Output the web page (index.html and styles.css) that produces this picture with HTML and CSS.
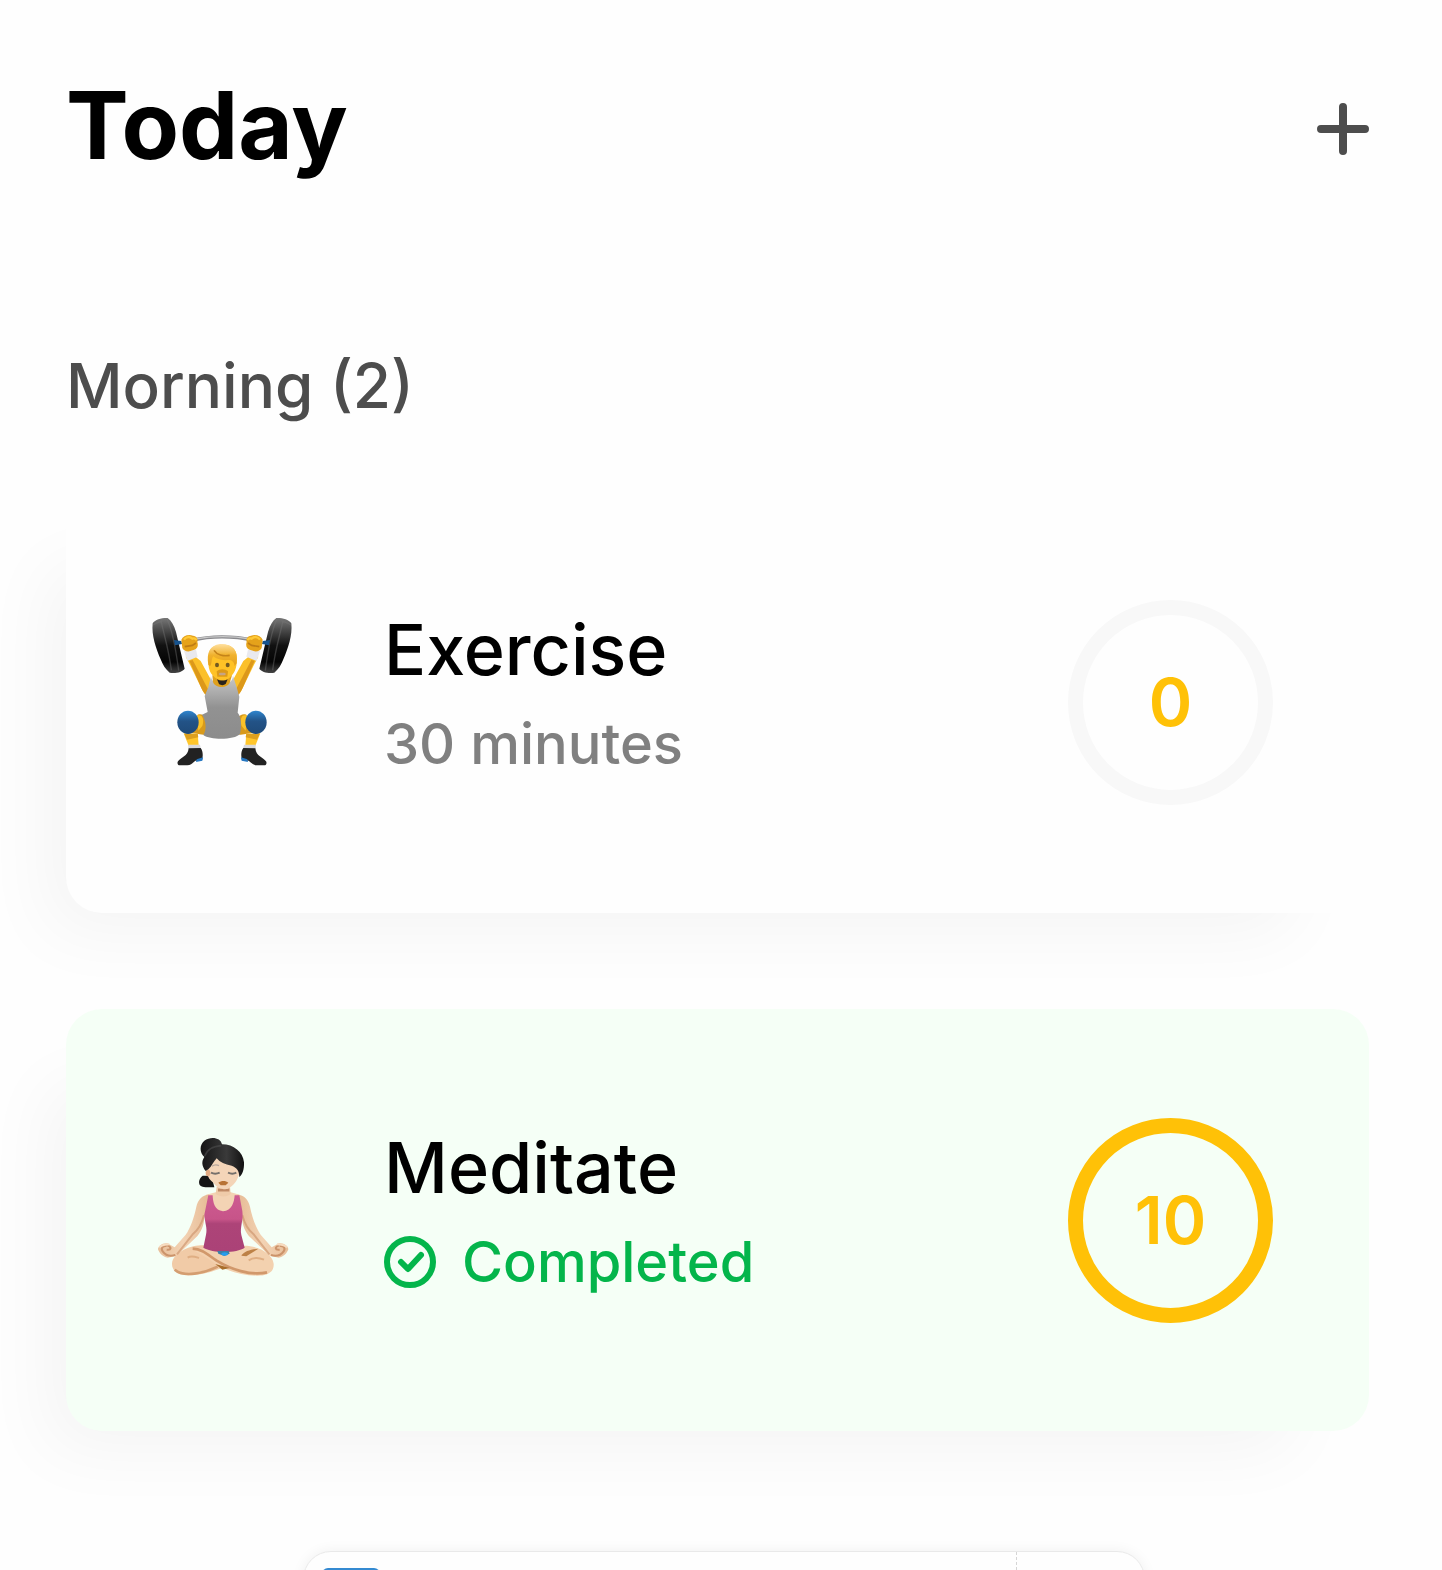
FILE: index.html
```html
<!DOCTYPE html>
<html lang="en">
<head>
  <meta charset="UTF-8" />
  <meta name="viewport" content="width=device-width, initial-scale=1.0"/>
  <title>Today</title>
  <link rel="stylesheet" href="styles.css">
</head>

<body>
  <header class="page-header">
    <h1>Today</h1>
    <button type="button" class="add-btn" aria-label="Add habit">
      <svg viewBox="0 0 52 52" width="52" height="52">
        <path d="M26 4V48M4 26H48" />
      </svg>
    </button>
  </header>

  <main>
    <h2 class="section-title">Morning (2)</h2>

    <div class="habit-list">
      <article class="habit-card">
        <!-- weight lifter -->
        <svg class="habit-icon" viewBox="0 36 510 540" aria-hidden="true">
          <defs>
            <linearGradient id="plate" x1="0" y1="0" x2="0" y2="1">
              <stop offset="0" stop-color="#777" />
              <stop offset="0.5" stop-color="#111" />
              <stop offset="0.8" stop-color="#050505" />
              <stop offset="1" stop-color="#444" />
            </linearGradient>
            <linearGradient id="suit" x1="0" y1="0" x2="0" y2="1">
              <stop offset="0" stop-color="#c8c8c8" />
              <stop offset="0.5" stop-color="#929292" />
              <stop offset="1" stop-color="#8c8c8c" />
            </linearGradient>
            <linearGradient id="pad" x1="0" y1="0" x2="0" y2="1">
              <stop offset="0" stop-color="#2f86cf" />
              <stop offset="0.45" stop-color="#235387" />
              <stop offset="1" stop-color="#1f4a78" />
            </linearGradient>
            <linearGradient id="hair" x1="0" y1="0" x2="0" y2="1">
              <stop offset="0" stop-color="#ffe0a0" />
              <stop offset="0.5" stop-color="#f0b12c" />
              <stop offset="1" stop-color="#e3a01c" />
            </linearGradient>
            <g id="lifter-side">
              <path d="M137 170L160 165L182 183L212 238L207 290C196 287 190 276 184 264L150 194Z" fill="#fbc02a" />
              <path d="M148 182L158 180L204 268L207 290C196 287 190 276 184 264Z" fill="#dc981a" />
              <path d="M132 153L168 149L173 170L142 183Z" fill="#e9e9ee" />
              <path d="M38 70C46 58 66 53 83 54C94 62 102 76 108 96L134 206C127 216 108 221 89 218C76 208 68 194 62 178C48 146 34 106 38 70Z" fill="url(#plate)" />
              <path d="M39 75C50 68 60 67 67 62M81 57C98 93 108 150 116 212M63 62C72 105 87 150 94 211" fill="none" stroke="#777" stroke-width="4" opacity=".4" />
              <path d="M102 120L124 123L126 132L105 136Z" fill="#16538e" />
              <path d="M124 119C129 108 144 102 159 107C170 108 175 117 172 126C176 138 172 148 158 151C144 158 132 153 127 144Z" fill="#e5a21b" />
              <path d="M132 119C139 109 149 109 157 116C162 114 168 116 169 121" fill="none" stroke="#ffc936" stroke-width="7" />
              <path d="M134 140L157 136L168 129" fill="none" stroke="#bf7c15" stroke-width="5" />
              <path d="M173 344C190 338 207 355 208 378C208 395 201 405 190 404L150 398Z" fill="#d89a1b" />
              <path d="M171 347C188 341 193 358 187 378L175 392Z" fill="#fac129" />
              <path d="M131 400L173 401L176 436L146 437Z" fill="#ffc62c" />
              <path d="M133 402L173 401L175 412L141 419Z" fill="#dda01e" />
              <ellipse cx="144" cy="367" rx="32" ry="35" fill="url(#pad)" />
              <path d="M145 434L180 434L183 448L145 448Z" fill="#d9d9dd" />
              <path d="M146 445L182 444C190 454 189 470 186 481L166 482C158 488 154 495 142 496H120C112 496 111 488 114 484C122 472 144 470 146 445Z" fill="#222" />
              <path d="M189 472L187 482L168 486L170 478Z" fill="#2577c2" />
            </g>
          </defs>
          <path d="M155 121C210 108 280 108 343 121" fill="none" stroke="#88888c" stroke-width="10" />
          <path d="M165 117C215 108 280 108 332 117" fill="none" stroke="#c8c8c8" stroke-width="4" />
          <use href="#lifter-side" />
          <use href="#lifter-side" transform="translate(492 0) scale(-1 1)" />
          <path d="M213 228C214 262 278 262 279 228L290 262L298 290L293 338C301 346 307 370 300 402C285 420 211 421 190 405C201 388 198 362 186 344L203 336L194 288L205 262Z" fill="url(#suit)" />
          <path d="M217 226H276L270 246C264 266 226 266 219 246Z" fill="#dfa01d" />
          <path d="M207 176C203 149 217 134 247 134C278 133 294 151 290 181C292 202 282 226 263 238C249 246 229 240 218 226C207 213 203 196 207 176Z" fill="#ffc226" />
          <path d="M205 194C199 159 209 136 240 132C274 130 296 149 290 190L284 198C282 184 275 179 262 180C247 182 230 178 220 169C213 177 217 190 210 199Z" fill="url(#hair)" />
          <path d="M222 151C230 164 250 170 269 166" fill="none" stroke="#c58419" stroke-width="5" />
          <ellipse cx="231" cy="195" rx="6" ry="7" fill="#735a21" />
          <ellipse cx="263" cy="195" rx="6" ry="7" fill="#735a21" />
          <path d="M230 214C238 206 256 206 264 214L262 230H232Z" fill="#dc9a19" />
          <rect x="237" y="218" width="20" height="8" rx="4" fill="#c5a486" />
          <path d="M231 238C239 243 255 243 263 238L257 252C251 257 242 256 237 252Z" fill="#29231c" />
        </svg>
        <div class="habit-info">
          <h3>Exercise</h3>
          <p class="duration">30 minutes</p>
        </div>
        <div class="streak">0</div>
      </article>

      <article class="habit-card completed">
        <!-- person in lotus position -->
        <svg class="habit-icon" viewBox="0 30 510 540" aria-hidden="true">
          <defs>
            <linearGradient id="top-pink" x1="0" y1="0" x2="0" y2="1">
              <stop offset="0" stop-color="#ce5b91" />
              <stop offset="0.42" stop-color="#c75489" />
              <stop offset="0.5" stop-color="#ad4478" />
              <stop offset="1" stop-color="#ab4277" />
            </linearGradient>
            <linearGradient id="skin" x1="0" y1="0" x2="1" y2="0">
              <stop offset="0" stop-color="#e8bf9a" />
              <stop offset="0.5" stop-color="#f3d3b4" />
              <stop offset="1" stop-color="#e6bb95" />
            </linearGradient>
            <linearGradient id="dark-hair" x1="0" y1="0" x2="1" y2="0">
              <stop offset="0" stop-color="#151515" />
              <stop offset="0.6" stop-color="#3a3a3a" />
              <stop offset="1" stop-color="#111" />
            </linearGradient>
            <g id="lotus-arm">
              <path d="M207 224C186 225 174 239 169 260C163 290 151 325 137 344L104 382L82 370C69 367 54 378 54 388C57 398 68 411 83 413L110 407L166 354C184 338 192 315 193 291L204 260Z" fill="url(#skin)" />
              <path d="M192 286C184 317 174 330 159 342L111 403" fill="none" stroke="#cd946c" stroke-width="6" opacity=".65" />
              <path d="M80 378C70 376 61 384 68 394C76 405 90 410 106 405M82 376C96 382 94 391 80 389" fill="none" stroke="#cc946b" stroke-width="6" />
              <path d="M58 382C66 375 75 373 88 373" fill="none" stroke="#f7dcc0" stroke-width="6" />
            </g>
          </defs>
          <path d="M183 376C142 378 98 402 96 431C95 459 125 468 153 466C193 465 232 448 263 439L315 378Z" fill="#f1cba7" />
          <path d="M302 378C350 374 397 399 401 431C403 459 378 468 349 467C296 466 246 449 207 418C188 404 166 397 157 386Z" fill="#f3d1af" />
          <path d="M104 449C132 473 191 460 233 440" fill="none" stroke="#c88a5a" stroke-width="8" opacity=".7" />
          <path d="M158 386C188 387 204 405 230 422C272 448 331 468 381 457" fill="none" stroke="#c88a5a" stroke-width="8" opacity=".8" />
          <path d="M226 432L269 444L247 449Z" fill="#a96d2b" />
          <path d="M304 407C313 393 331 388 355 386L319 409Z" fill="#bd8146" />
          <path d="M143 413C154 405 165 410 177 414M326 421C342 410 357 413 372 419" fill="none" stroke="#dfae83" stroke-width="6" />
          <path d="M198 224L230 216H270L299 224L308 243L306 275H194L192 241Z" fill="#f3d3b4" />
          <use href="#lotus-arm" />
          <use href="#lotus-arm" transform="translate(499 0) scale(-1 1)" />
          <path d="M205 226H218C219 249 224 271 249 274C276 272 282 248 284 226H298L307 273C311 303 299 320 304 345L314 383C291 400 217 400 190 383L198 344C203 325 194 306 193 284Z" fill="url(#top-pink)" />
          <path d="M232 393H266L269 401L253 408L235 401Z" fill="#3d7fa8" />
          <ellipse cx="254" cy="402" rx="10" ry="5" fill="#269df0" />
          <path d="M230 200H270L272 222C262 232 240 232 227 222Z" fill="#efcba9" />
          <path d="M234 210H268" stroke="#c08a66" stroke-width="9" />
          <path d="M207 167L188 167C175 177 174 193 184 199C196 205 213 200 223 202L217 178Z" fill="#151515" />
          <path d="M204 136C213 118 231 110 252 111C281 113 298 132 298 157C295 181 280 198 262 207C247 209 231 204 220 188C210 181 204 172 201 158Z" fill="#f4d5b8" />
          <ellipse cx="204" cy="159" rx="7" ry="10" fill="#e2aa82" />
          <path d="M197 153C185 138 184 124 193 111C178 98 178 74 193 62C212 48 242 52 246 73C281 73 309 96 312 127C313 148 307 165 298 171C298 153 290 142 275 137C255 133 240 127 230 115C220 125 216 139 205 148Z" fill="url(#dark-hair)" />
          <path d="M194 109C202 87 217 80 244 77" fill="none" stroke="#555" stroke-width="5" opacity=".5" />
          <path d="M213 158C221 162 230 162 239 158M264 158C273 162 281 162 289 158" fill="none" stroke="#75706b" stroke-width="6" />
          <path d="M216 139C222 134 229 133 237 137" fill="none" stroke="#b6a69b" stroke-width="4" />
          <path d="M235 188C244 181 257 181 265 188L257 196H242Z" fill="#b87335" />
        </svg>
        <div class="habit-info">
          <h3>Meditate</h3>
          <p class="status">
            <svg viewBox="0 0 52 52" width="52" height="52" aria-hidden="true">
              <circle cx="26" cy="26" r="23" />
              <path d="M17 26L24 33L37 19" />
            </svg>
            Completed
          </p>
        </div>
        <div class="streak">10</div>
      </article>
    </div>
  </main>

  <div class="bottom-bar">
    <div class="bar-main"><span class="bar-thumb"></span></div>
    <div class="bar-side"></div>
  </div>
</body>
</html>
```
FILE: styles.css
```css
* {
  box-sizing: border-box;
}

body {
  margin: 0;
  padding: 72px 73px 138px 66px;
  min-height: 100vh;
  background: #fefefe;
  color: #000;
  font-family: Inter, "Open Sans", sans-serif;
}

h1, h2, h3, p {
  margin: 0;
}

.page-header {
  display: flex;
  justify-content: space-between;
  align-items: center;
  height: 114px;
}

.page-header h1 {
  padding-bottom: 8px;
  font-size: 94px;
  font-weight: 700;
  line-height: 104px;
}

.add-btn {
  display: flex;
  padding: 0;
  border: none;
  background: none;
  cursor: pointer;
}

.add-btn svg {
  fill: none;
  stroke: #4d4d4d;
  stroke-width: 8;
  stroke-linecap: round;
}

.section-title {
  margin-top: 160px;
  color: #4d4d4d;
  font-size: 62px;
  font-weight: 450;
  line-height: 80px;
}

.habit-list {
  display: flex;
  flex-direction: column;
  gap: 96px;
  margin-top: 65px;
}

.habit-card {
  display: flex;
  align-items: center;
  gap: 74px;
  min-height: 422px;
  padding: 0 96px 0 74px;
  border-radius: 36px;
  background: #fefefe;
  box-shadow: -48px 48px 72px -30px rgba(0, 0, 0, 0.045);
}

.habit-card.completed {
  background: #f5fff6;
}

.habit-icon {
  flex: none;
  width: 170px;
  height: 180px;
}

.habit-info {
  flex: 1;
  padding-bottom: 18px;
}

.habit-info h3 {
  margin-bottom: 6px;
  font-size: 70px;
  font-weight: 450;
  line-height: 96px;
}

.duration {
  color: #808080;
  font-size: 56px;
  font-weight: 450;
  line-height: 80px;
}

.status {
  display: flex;
  align-items: center;
  gap: 26px;
  color: #04b54b;
  font-size: 56px;
  font-weight: 450;
  line-height: 80px;
}

.status svg {
  fill: none;
  stroke: currentColor;
  stroke-width: 6;
  stroke-linecap: round;
  stroke-linejoin: round;
}

.streak {
  display: flex;
  justify-content: center;
  align-items: center;
  width: 205px;
  height: 205px;
  border: 15px solid #f8f8f8;
  border-radius: 50%;
  color: #ffc107;
  font-size: 66px;
  font-weight: 600;
}

.completed .streak {
  border-color: #ffc107;
}

/* floating bar, mostly below the fold */
.bottom-bar {
  position: fixed;
  left: 21%;
  right: 20.6%;
  bottom: -61px;
  display: flex;
  height: 80px;
  border: 1px solid #e9e9e9;
  border-radius: 28px;
  background: #fefefe;
  box-shadow: 0 0 14px rgba(0, 0, 0, 0.06);
}

.bar-main {
  flex: 1;
  padding: 16px 18px;
}

.bar-thumb {
  display: block;
  width: 58px;
  height: 48px;
  border-radius: 6px;
  background: #348ad1;
}

.bar-side {
  width: 128px;
  border-left: 1px dashed #d5d5d5;
}
```
